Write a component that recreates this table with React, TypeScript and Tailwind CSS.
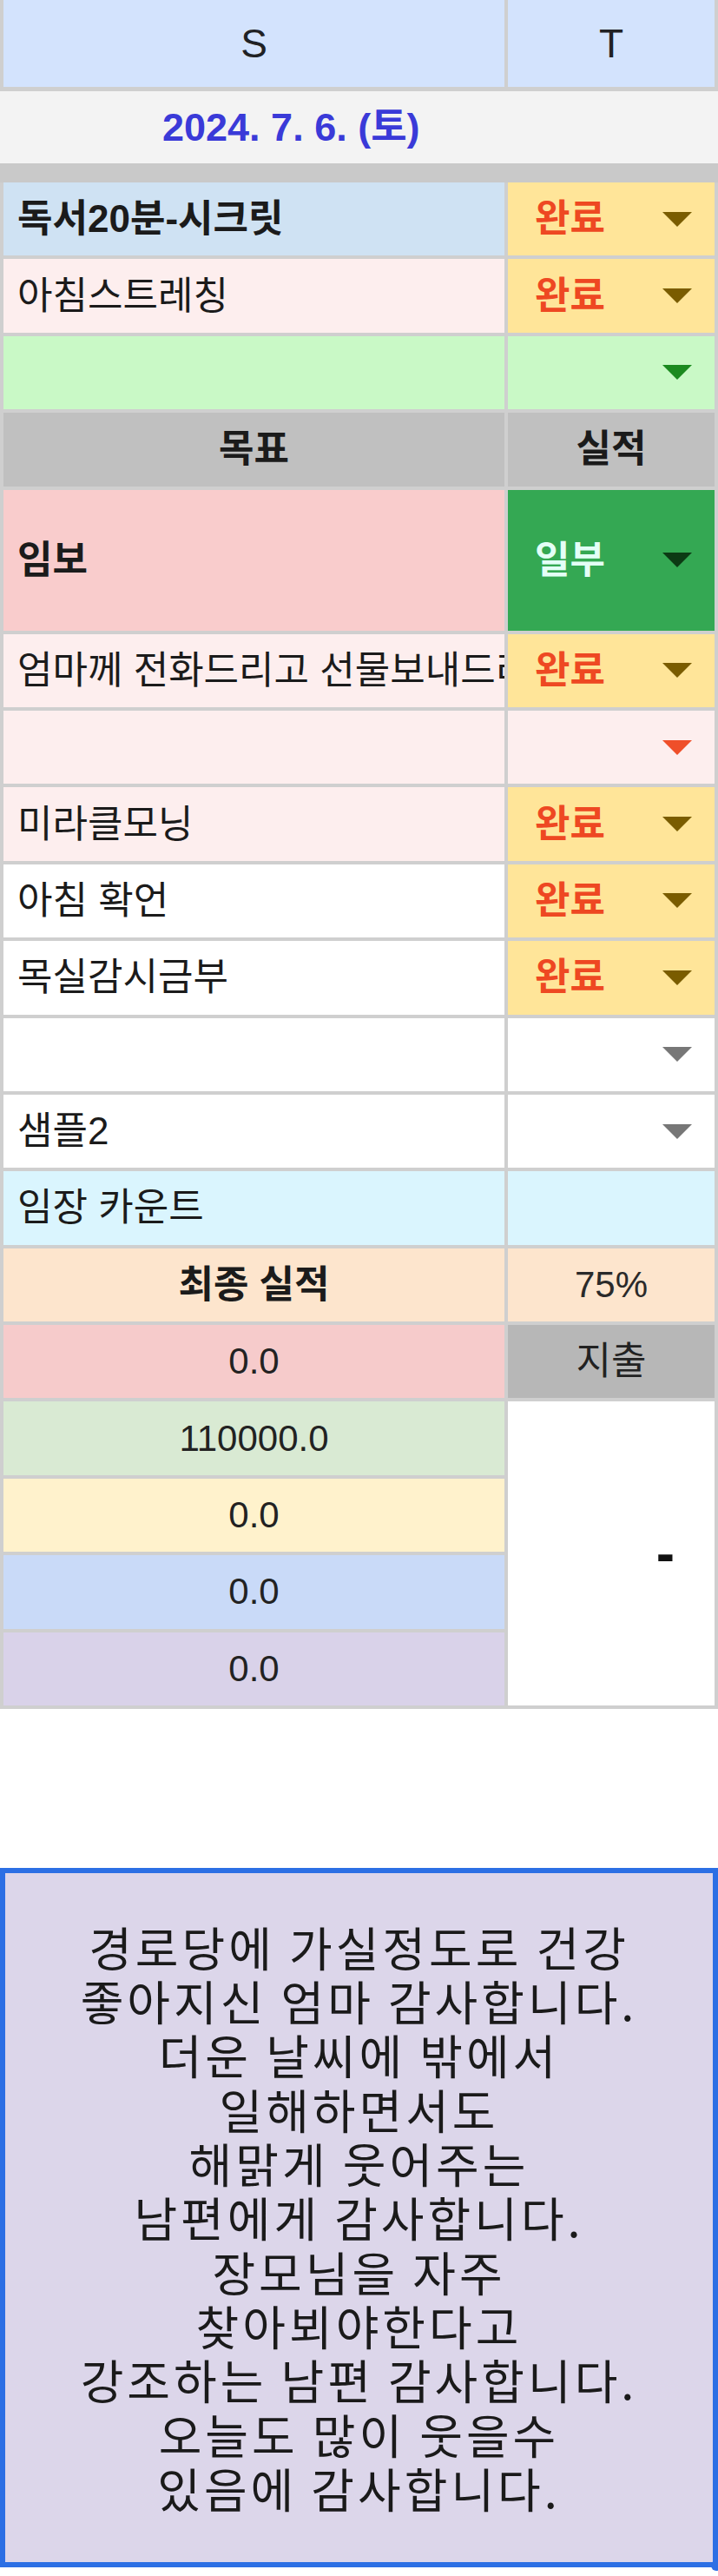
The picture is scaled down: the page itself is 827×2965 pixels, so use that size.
import React from "react";

const FONT = "font-['Liberation_Sans','Noto_Sans_CJK_KR',sans-serif]";

function Tri({ color }: { color: string }) {
  return (
    <svg width="34" height="17" viewBox="0 0 34 17" className="shrink-0">
      <polygon points="0,0 34,0 17,17" fill={color} />
    </svg>
  );
}

type StatusCellProps = {
  bg: string;
  text?: string;
  textClass?: string;
  tri: string;
  h?: string;
};

function StatusCell({ bg, text, textClass, tri, h = "h-[84.4px]" }: StatusCellProps) {
  return (
    <div className={`${bg} ${h} flex items-center justify-between pl-[31px] pr-[26px]`}>
      <span className={`text-[44px] leading-none ${textClass ?? ""}`}>{text ?? ""}</span>
      <Tri color={tri} />
    </div>
  );
}

function LeftCell({
  bg,
  text,
  bold,
  h = "h-[84.4px]",
}: {
  bg: string;
  text?: string;
  bold?: boolean;
  h?: string;
}) {
  return (
    <div
      className={`${bg} ${h} flex items-center overflow-hidden whitespace-nowrap pl-[16px] text-[44px] leading-none text-[#1b1b1b] ${
        bold ? "font-bold" : "font-normal"
      }`}
    >
      {text ?? ""}
    </div>
  );
}

const DONE = "font-bold text-[#ee4822]";

export default function App() {
  return (
    <div className={`${FONT} w-[827px] min-h-[2965px] bg-white`}>
      {/* Table */}
      <div className="bg-[#cfcfcf] px-[4px] pb-[4px]">
        {/* Column header */}
        <div className="grid grid-cols-[577px_238px] gap-x-[4px] pb-[5px]">
          <div className="h-[100px] bg-[#d3e3fd] flex items-center justify-center text-[46px] text-[#202124]">
            S
          </div>
          <div className="h-[100px] bg-[#d3e3fd] flex items-center justify-center text-[46px] text-[#202124]">
            T
          </div>
        </div>
        {/* Date row */}
        <div className="h-[83px] bg-[#f3f3f3] -mx-[4px] flex items-center pl-[187px] text-[45px] font-bold text-[#3a3ad8] leading-none">
          2024. 7. 6. (토)
        </div>
        <div className="h-[22px] bg-[#c9c9c9] -mx-[4px]" />

        {/* Body grid */}
        <div className="grid grid-cols-[577px_238px] gap-[4px]">
          <LeftCell bg="bg-[#cfe2f3]" text="독서20분-시크릿" bold />
          <StatusCell bg="bg-[#ffe599]" text="완료" textClass={DONE} tri="#7a5c00" />

          <LeftCell bg="bg-[#fdeeee]" text="아침스트레칭" />
          <StatusCell bg="bg-[#ffe599]" text="완료" textClass={DONE} tri="#7a5c00" />

          <LeftCell bg="bg-[#c9f9c6]" />
          <StatusCell bg="bg-[#c9f9c6]" tri="#1b8a1f" />

          <div className="h-[84.4px] bg-[#c0c0c0] flex items-center justify-center text-[44px] font-bold text-[#1b1b1b] leading-none">
            목표
          </div>
          <div className="h-[84.4px] bg-[#c0c0c0] flex items-center justify-center text-[44px] font-bold text-[#1b1b1b] leading-none">
            실적
          </div>

          <LeftCell bg="bg-[#f9cccc]" text="임보" bold h="h-[162px]" />
          <StatusCell
            bg="bg-[#34a853]"
            text="일부"
            textClass="font-bold text-[#e3fff6]"
            tri="#0c3a14"
            h="h-[162px]"
          />

          <LeftCell bg="bg-[#fdeeee]" text="엄마께 전화드리고 선물보내드리기" />
          <StatusCell bg="bg-[#ffe599]" text="완료" textClass={DONE} tri="#7a5c00" />

          <LeftCell bg="bg-[#fdeeee]" />
          <StatusCell bg="bg-[#fdeeee]" tri="#ef4f2a" />

          <LeftCell bg="bg-[#fdeeee]" text="미라클모닝" />
          <StatusCell bg="bg-[#ffe599]" text="완료" textClass={DONE} tri="#7a5c00" />

          <LeftCell bg="bg-white" text="아침 확언" />
          <StatusCell bg="bg-[#ffe599]" text="완료" textClass={DONE} tri="#7a5c00" />

          <LeftCell bg="bg-white" text="목실감시금부" />
          <StatusCell bg="bg-[#ffe599]" text="완료" textClass={DONE} tri="#7a5c00" />

          <LeftCell bg="bg-white" />
          <StatusCell bg="bg-white" tri="#777777" />

          <LeftCell bg="bg-white" text="샘플2" />
          <StatusCell bg="bg-white" tri="#777777" />

          <LeftCell bg="bg-[#daf5fe]" text="임장 카운트" />
          <div className="h-[84.4px] bg-[#daf5fe]" />

          <div className="h-[84.4px] bg-[#fde5cd] flex items-center justify-center text-[44px] font-bold text-[#1b1b1b] leading-none">
            최종 실적
          </div>
          <div className="h-[84.4px] bg-[#fde5cd] flex items-center justify-center text-[42px] text-[#2a2a2a] leading-none">
            75%
          </div>

          <div className="h-[84.4px] bg-[#f6cbcb] flex items-center justify-center text-[42px] text-[#222] leading-none">
            0.0
          </div>
          <div className="h-[84.4px] bg-[#b7b7b7] flex items-center justify-center text-[44px] text-[#222] leading-none">
            지출
          </div>

          <div className="h-[84.4px] bg-[#d9ead3] flex items-center justify-center text-[42px] text-[#222] leading-none">
            110000.0
          </div>
          <div className="row-span-4 bg-white flex items-center justify-end pr-[46px] text-[64px] font-bold text-[#111] leading-none">
            -
          </div>
          <div className="h-[84.4px] bg-[#fff2cc] flex items-center justify-center text-[42px] text-[#222] leading-none">
            0.0
          </div>
          <div className="h-[84.4px] bg-[#c9daf8] flex items-center justify-center text-[42px] text-[#222] leading-none">
            0.0
          </div>
          <div className="h-[84.4px] bg-[#d9d2e9] flex items-center justify-center text-[42px] text-[#222] leading-none">
            0.0
          </div>
        </div>
      </div>

      {/* Gratitude card */}
      <div className="mt-[183px] relative">
        <div className="h-[805px] border-[6px] border-[#2c6fe4] bg-[#dcd6ea] flex items-center justify-center">
          <p className="text-center text-[54px] leading-[62.3px] tracking-[4px] text-[#1a1a1a] font-['Noto_Sans_CJK_KR',sans-serif]">
            경로당에 가실정도로 건강
            <br />
            좋아지신 엄마 감사합니다.
            <br />
            더운 날씨에 밖에서
            <br />
            일해하면서도
            <br />
            해맑게 웃어주는
            <br />
            남편에게 감사합니다.
            <br />
            장모님을 자주
            <br />
            찾아뵈야한다고
            <br />
            강조하는 남편 감사합니다.
            <br />
            오늘도 많이 웃을수
            <br />
            있음에 감사합니다.
          </p>
        </div>
        <div className="absolute right-[-4px] bottom-[-4px] w-[12px] h-[12px] rounded-full bg-[#2c6fe4]" />
      </div>
    </div>
  );
}
